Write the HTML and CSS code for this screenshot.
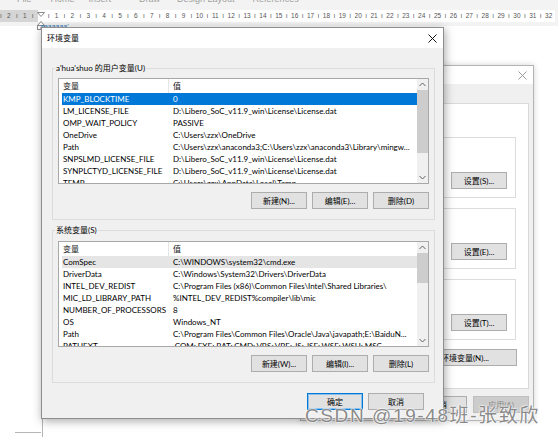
FILE: index.html
```html
<!DOCTYPE html>
<html>
<head>
<meta charset="utf-8">
<title>环境变量</title>
<link rel="stylesheet" href="styles.css">
</head>
<body>
<div class="word">
  <div class="menubar">
    <span class="mi m1">File</span><span class="mi m2">Home</span><span class="mi m3">Insert</span><span class="mi m4">Draw</span><span class="mi m5">Design Layout</span><span class="mi m6">References</span>
  </div>
  <div class="rulerbar">
    <div class="ruler">
      <span class="rt">ı</span><span class="rt">2</span><span class="rt">ı</span><span class="rt">1</span><span class="rt">ı</span><span class="rt"></span>
      <span class="rt">ı</span><span class="rt">1</span><span class="rt">ı</span><span class="rt">2</span><span class="rt">ı</span><span class="rt">3</span><span class="rt">ı</span><span class="rt">4</span><span class="rt">ı</span><span class="rt">5</span><span class="rt">ı</span><span class="rt">6</span><span class="rt">ı</span><span class="rt">7</span><span class="rt">ı</span><span class="rt">8</span><span class="rt">ı</span><span class="rt">9</span><span class="rt">ı</span><span class="rt">10</span><span class="rt">ı</span><span class="rt">11</span><span class="rt">ı</span><span class="rt">12</span><span class="rt">ı</span><span class="rt">13</span><span class="rt">ı</span><span class="rt">14</span><span class="rt">ı</span><span class="rt">15</span><span class="rt">ı</span><span class="rt">16</span><span class="rt">ı</span><span class="rt">17</span><span class="rt">ı</span><span class="rt">18</span><span class="rt">ı</span><span class="rt">19</span><span class="rt">ı</span><span class="rt">20</span><span class="rt">ı</span><span class="rt">21</span><span class="rt">ı</span><span class="rt">22</span><span class="rt">ı</span><span class="rt">23</span><span class="rt">ı</span><span class="rt">24</span><span class="rt">ı</span><span class="rt">25</span><span class="rt">ı</span><span class="rt">26</span><span class="rt">ı</span><span class="rt">27</span><span class="rt">ı</span><span class="rt">28</span><span class="rt">ı</span><span class="rt">29</span><span class="rt">ı</span><span class="rt">30</span><span class="rt">ı</span><span class="rt">31</span><span class="rt">ı</span><span class="rt">32</span>
    </div>
    <svg class="indent" width="8" height="18" viewBox="0 0 8 18"><path d="M0.5 0.5H7.5L4 4.5Z" fill="#fff" stroke="#8a8a8a"/><path d="M4 9.5L7.5 13.5H0.5Z" fill="#fff" stroke="#8a8a8a"/><rect x="0.5" y="13.5" width="7" height="4" fill="#fff" stroke="#8a8a8a"/></svg>
  </div>
  <div class="doc">
    <span class="seltext">aaaaaaa'</span>
  </div>
</div>

<div class="cornermark-h"></div>
<div class="cornermark-v"></div>

<!-- background window: 系统属性 -->
<div class="win sysprops">
  <div class="titlebar inactive">
    <span class="title"></span>
    <svg class="closex" width="9" height="9" viewBox="0 0 9 9"><path d="M0.5 0.5L8.5 8.5M8.5 0.5L0.5 8.5" stroke="#9a9a9a" stroke-width="1"/></svg>
  </div>
  <div class="sp-body">
    <div class="tabpage">
      <div class="sp-group"><button class="btn">设置(S)...</button></div>
      <div class="sp-group"><button class="btn">设置(E)...</button></div>
      <div class="sp-group"><button class="btn">设置(T)...</button></div>
      <div class="env-row"><button class="btn wide">环境变量(N)...</button></div>
    </div>
    <div class="sp-footer">
      <button class="btn">确定</button><button class="btn">取消</button><button class="btn disabled">应用(A)</button>
    </div>
  </div>
</div>

<!-- main dialog: 环境变量 -->
<div class="win env">
  <div class="titlebar">
    <span class="title">环境变量</span>
    <svg class="closex" width="9" height="9" viewBox="0 0 9 9"><path d="M0.5 0.5L8.5 8.5M8.5 0.5L0.5 8.5" stroke="#111" stroke-width="1"/></svg>
  </div>
  <div class="env-body">
    <fieldset class="group">
      <legend>a'hua'shuo 的用户变量(U)</legend>
      <div class="listview">
        <div class="lv-main">
          <div class="lv-head"><span class="h1">变量</span><span class="h2">值</span></div>
          <div class="lv-row sel"><span class="c1">KMP_BLOCKTIME</span><span class="c2">0</span></div>
          <div class="lv-row"><span class="c1">LM_LICENSE_FILE</span><span class="c2">D:\Libero_SoC_v11.9_win\License\License.dat</span></div>
          <div class="lv-row"><span class="c1">OMP_WAIT_POLICY</span><span class="c2">PASSIVE</span></div>
          <div class="lv-row"><span class="c1">OneDrive</span><span class="c2">C:\Users\zzx\OneDrive</span></div>
          <div class="lv-row"><span class="c1">Path</span><span class="c2">C:\Users\zzx\anaconda3;C:\Users\zzx\anaconda3\Library\mingw...</span></div>
          <div class="lv-row"><span class="c1">SNPSLMD_LICENSE_FILE</span><span class="c2">D:\Libero_SoC_v11.9_win\License\License.dat</span></div>
          <div class="lv-row"><span class="c1">SYNPLCTYD_LICENSE_FILE</span><span class="c2">D:\Libero_SoC_v11.9_win\License\License.dat</span></div>
          <div class="lv-row"><span class="c1">TEMP</span><span class="c2">C:\Users\zzx\AppData\Local\Temp</span></div>
        </div>
        <div class="vscroll">
          <svg class="arr" width="7" height="11" viewBox="0 0 7 11"><path d="M0.5 7L3.5 4L6.5 7" fill="none" stroke="#606060"/></svg>
          <div class="track"><div class="thumb thumb-user"></div></div>
          <svg class="arr" width="7" height="11" viewBox="0 0 7 11"><path d="M0.5 4L3.5 7L6.5 4" fill="none" stroke="#606060"/></svg>
        </div>
      </div>
      <div class="btnrow">
        <button class="btn">新建(N)...</button><button class="btn">编辑(E)...</button><button class="btn">删除(D)</button>
      </div>
    </fieldset>

    <fieldset class="group sys">
      <legend>系统变量(S)</legend>
      <div class="listview">
        <div class="lv-main">
          <div class="lv-head"><span class="h1">变量</span><span class="h2">值</span></div>
          <div class="lv-row sel-dim"><span class="c1">ComSpec</span><span class="c2">C:\WINDOWS\system32\cmd.exe</span></div>
          <div class="lv-row"><span class="c1">DriverData</span><span class="c2">C:\Windows\System32\Drivers\DriverData</span></div>
          <div class="lv-row"><span class="c1">INTEL_DEV_REDIST</span><span class="c2">C:\Program Files (x86)\Common Files\Intel\Shared Libraries\</span></div>
          <div class="lv-row"><span class="c1">MIC_LD_LIBRARY_PATH</span><span class="c2">%INTEL_DEV_REDIST%compiler\lib\mic</span></div>
          <div class="lv-row"><span class="c1">NUMBER_OF_PROCESSORS</span><span class="c2">8</span></div>
          <div class="lv-row"><span class="c1">OS</span><span class="c2">Windows_NT</span></div>
          <div class="lv-row"><span class="c1">Path</span><span class="c2">C:\Program Files\Common Files\Oracle\Java\javapath;E:\BaiduN...</span></div>
          <div class="lv-row"><span class="c1">PATHEXT</span><span class="c2">.COM;.EXE;.BAT;.CMD;.VBS;.VBE;.JS;.JSE;.WSF;.WSH;.MSC</span></div>
        </div>
        <div class="vscroll">
          <svg class="arr" width="7" height="11" viewBox="0 0 7 11"><path d="M0.5 7L3.5 4L6.5 7" fill="none" stroke="#606060"/></svg>
          <div class="track"><div class="thumb thumb-sys"></div></div>
          <svg class="arr" width="7" height="11" viewBox="0 0 7 11"><path d="M0.5 4L3.5 7L6.5 4" fill="none" stroke="#606060"/></svg>
        </div>
      </div>
      <div class="btnrow">
        <button class="btn">新建(W)...</button><button class="btn">编辑(I)...</button><button class="btn">删除(L)</button>
      </div>
    </fieldset>

    <div class="env-footer">
      <button class="btn default">确定</button><button class="btn">取消</button>
    </div>
  </div>
</div>

<div class="watermark">CSDN @19-48班-张致欣</div>
</body>
</html>
```

FILE: styles.css
```css
* { box-sizing: border-box; }
html, body { margin: 0; padding: 0; }
body {
  width: 558px;
  height: 437px;
  overflow: hidden;
  position: relative;
  background: #fff;
  font-family: "Lato", "Noto Sans CJK SC", sans-serif;
  font-size: 8px;
  color: #000;
}

/* ---------- Word background ---------- */
.menubar {
  height: 6px;
  background: #f3f3f3;
  overflow: hidden;
  display: flex;
  color: #a0a0a0;
  font-family: "Liberation Sans", sans-serif;
  font-size: 9px;
  line-height: 10px;
}
.mi { margin-top: -6px; white-space: nowrap; }
.m1 { margin-left: 17px; }
.m2 { margin-left: 19px; }
.m3 { margin-left: 14px; }
.m4 { margin-left: 28px; }
.m5 { margin-left: 17px; }
.m6 { margin-left: 18px; }

.rulerbar {
  height: 20px;
  background: #f3f3f3;
  position: relative;
  display: flex;
  align-items: center;
}
.ruler {
  height: 12px;
  width: 100%;
  display: flex;
  align-items: center;
  margin-left: -3px;
  background: linear-gradient(to right, #d5d5d5 0, #d5d5d5 41px, #fff 41px);
  font-family: "Liberation Sans", sans-serif;
  font-size: 6.5px;
  color: #555;
  overflow: hidden;
}
.rt { flex: none; width: 7.95px; text-align: center; line-height: 12px; white-space: nowrap; }
.indent { position: absolute; left: 37px; top: 6px; }

.doc { height: 411px; position: relative; }
.seltext {
  position: absolute; left: 40px; top: -3px;
  font-family: "Liberation Sans", sans-serif;
  font-size: 7px; color: #2e75b6; line-height: 8px;
}
.cornermark-h { position: absolute; left: 15px; top: 432px; width: 26px; height: 1px; background: #b5b5b5; }
.cornermark-v { position: absolute; left: 42px; top: 418px; width: 1px; height: 19px; background: #b5b5b5; }

/* ---------- Windows ---------- */
.win {
  position: absolute;
  background: #f0f0f0;
  display: flex;
  flex-direction: column;
}
.titlebar {
  flex: none;
  height: 20px;
  background: #fff;
  display: flex;
  align-items: center;
  justify-content: space-between;
  padding: 0 6px 0 5px;
}
.title { font-size: 8px; line-height: 12px; }
.closex { display: block; }

.btn {
  font-family: inherit;
  font-size: 8px;
  line-height: 12px;
  color: #000;
  width: 56px;
  height: 17px;
  padding: 0;
  margin: 0;
  background: #e1e1e1;
  border: 1px solid #adadad;
  border-radius: 0;
  flex: none;
}
.btn.default { border-color: #0078d7; box-shadow: inset 0 0 0 1px #8cc0ea; }
.btn.disabled { background: #cccccc; border-color: #bfbfbf; color: #8a8a8a; }
.btn.wide { width: 104px; }

/* ---- system properties (behind) ---- */
.sysprops {
  left: 300px;
  top: 65px;
  width: 234px;
  height: 356px;
  border: 1px solid #b4b4b4;
  box-shadow: 0 0 6px rgba(0,0,0,.18);
  z-index: 1;
}
.sysprops .titlebar { height: 18px; padding-right: 6px; }
.sp-body { flex: 1; padding: 19px 4px 0 0; display: flex; flex-direction: column; }
.tabpage {
  height: 286px;
  background: #fff;
  border: 1px solid #d9d9d9;
  padding: 33px 12px 0 0;
  display: flex;
  flex-direction: column;
}
.sp-group {
  height: 61px;
  border: 1px solid #dcdcdc;
  margin-top: 10px;
  display: flex;
  justify-content: flex-end;
  align-items: flex-end;
  padding: 0 8px 8px 0;
}
.sp-group:first-child { margin-top: 0; }
.env-row { display: flex; justify-content: flex-end; margin-top: 9px; margin-right: -1px; }
.sp-footer { display: flex; justify-content: flex-end; gap: 6px; padding-top: 7px; }

/* ---- environment variables dialog ---- */
.env {
  left: 41px;
  top: 27px;
  width: 403px;
  height: 392px;
  border: 1px solid #8e8e8e;
  box-shadow: 1px 2px 9px rgba(0,0,0,.35);
  z-index: 2;
}
.env-body { flex: 1; padding: 14px 8px 0 10px; display: flex; flex-direction: column; }

.group {
  margin: 0;
  min-width: 0;
  padding: 4px 5px 10px 5px;
  border: 1px solid #dcdcdc;
}
.group.sys { margin-top: 4px; padding-top: 5px; }
.group legend {
  padding: 0 1px;
  margin-left: -3px;
  line-height: 12px;
  font-size: 8px;
}

.listview {
  height: 106px;
  background: #fff;
  border: 1px solid #a8a8a8;
  display: flex;
  overflow: hidden;
}
.lv-main { flex: 1; min-width: 0; overflow: hidden; }
.lv-head { display: flex; height: 14px; line-height: 14px; color: #1a1a1a; }
.h1 { flex: none; width: 110px; padding-left: 4px; border-right: 1px solid #e5e5e5; }
.h2 { padding-left: 4px; }
.lv-row { display: flex; height: 12px; line-height: 12px; margin-left: 3px; white-space: nowrap; }
.c1 { flex: none; width: 110px; padding-left: 1px; overflow: hidden; }
.c2 { flex: 1; min-width: 0; padding-left: 1px; overflow: hidden; }
.lv-row.sel { background: #0078d7; color: #fff; }
.lv-row.sel-dim { background: #e5e5e5; }

.vscroll {
  flex: none;
  width: 11px;
  background: #f0f0f0;
  display: flex;
  flex-direction: column;
  align-items: center;
}
.arr { flex: none; display: block; }
.track { flex: 1; width: 100%; }
.thumb { width: 100%; background: #cdcdcd; }
.thumb-user { height: 63px; }
.thumb-sys { height: 30px; }

.btnrow { display: flex; justify-content: flex-end; gap: 5px; margin-top: 8px; }
.env-footer { display: flex; justify-content: flex-end; gap: 5px; margin-top: 10px; padding-right: 11px; }

/* ---------- watermark ---------- */
.watermark {
  position: absolute;
  left: 305px;
  top: 404px;
  z-index: 5;
  font-family: "Liberation Sans", "Noto Sans CJK SC", sans-serif;
  font-size: 19px;
  line-height: 24px;
  letter-spacing: 1.6px;
  color: #8a8a8a;
  white-space: nowrap;
  text-shadow: 0 0 2px #fff, 0 0 2px #fff, 0 0 1px #fff;
}
```
